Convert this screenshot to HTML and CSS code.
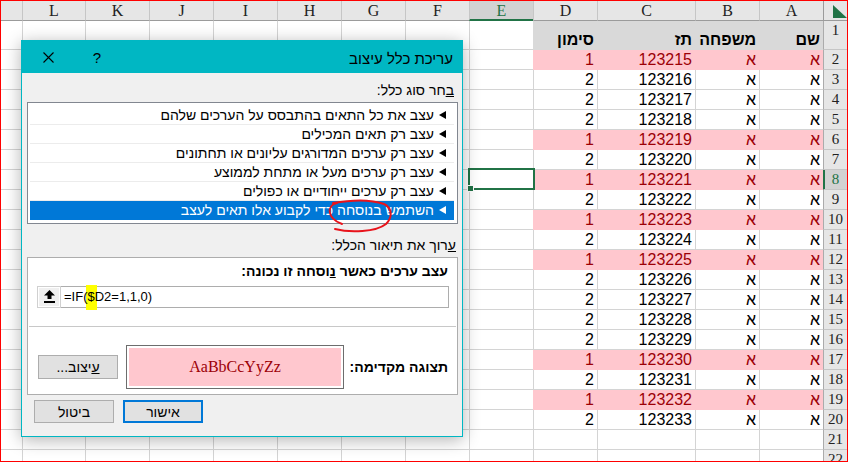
FILE: index.html
```html
<!DOCTYPE html>
<html lang="he">
<head>
<meta charset="utf-8">
<title>עריכת כלל עיצוב</title>
<link rel="stylesheet" href="styles.css">
</head>
<body>
<div class="screen">
  <div class="sheet">
    <div class="row hdr"><b class="rh corner"><svg width="14" height="13" viewBox="0 0 14 13"><polygon points="0,0 0,13 14,13" fill="#217346"/></svg></b><i>A</i><i>B</i><i>C</i><i>D</i><i class="csel">E</i><i>F</i><i>G</i><i>H</i><i>I</i><i>J</i><i>K</i><i>L</i><i></i></div>
    <div class="row r1"><b class="rh">1</b><i class="h">שם</i><i class="h">משפחה</i><i class="h">תז</i><i class="h">סימון</i><i></i><i></i><i></i><i></i><i></i><i></i><i></i><i></i><i></i></div>
    <div class="row pk"><b class="rh">2</b><i>א</i><i>א</i><i>123215</i><i>1</i><i></i><i></i><i></i><i></i><i></i><i></i><i></i><i></i><i></i></div>
    <div class="row"><b class="rh">3</b><i>א</i><i>א</i><i>123216</i><i>2</i><i></i><i></i><i></i><i></i><i></i><i></i><i></i><i></i><i></i></div>
    <div class="row"><b class="rh">4</b><i>א</i><i>א</i><i>123217</i><i>2</i><i></i><i></i><i></i><i></i><i></i><i></i><i></i><i></i><i></i></div>
    <div class="row"><b class="rh">5</b><i>א</i><i>א</i><i>123218</i><i>2</i><i></i><i></i><i></i><i></i><i></i><i></i><i></i><i></i><i></i></div>
    <div class="row pk"><b class="rh">6</b><i>א</i><i>א</i><i>123219</i><i>1</i><i></i><i></i><i></i><i></i><i></i><i></i><i></i><i></i><i></i></div>
    <div class="row"><b class="rh">7</b><i>א</i><i>א</i><i>123220</i><i>2</i><i></i><i></i><i></i><i></i><i></i><i></i><i></i><i></i><i></i></div>
    <div class="row pk"><b class="rh rsel">8</b><i>א</i><i>א</i><i>123221</i><i>1</i><i class="cur"></i><i></i><i></i><i></i><i></i><i></i><i></i><i></i><i></i></div>
    <div class="row"><b class="rh">9</b><i>א</i><i>א</i><i>123222</i><i>2</i><i></i><i></i><i></i><i></i><i></i><i></i><i></i><i></i><i></i></div>
    <div class="row pk"><b class="rh">10</b><i>א</i><i>א</i><i>123223</i><i>1</i><i></i><i></i><i></i><i></i><i></i><i></i><i></i><i></i><i></i></div>
    <div class="row"><b class="rh">11</b><i>א</i><i>א</i><i>123224</i><i>2</i><i></i><i></i><i></i><i></i><i></i><i></i><i></i><i></i><i></i></div>
    <div class="row pk"><b class="rh">12</b><i>א</i><i>א</i><i>123225</i><i>1</i><i></i><i></i><i></i><i></i><i></i><i></i><i></i><i></i><i></i></div>
    <div class="row"><b class="rh">13</b><i>א</i><i>א</i><i>123226</i><i>2</i><i></i><i></i><i></i><i></i><i></i><i></i><i></i><i></i><i></i></div>
    <div class="row"><b class="rh">14</b><i>א</i><i>א</i><i>123227</i><i>2</i><i></i><i></i><i></i><i></i><i></i><i></i><i></i><i></i><i></i></div>
    <div class="row"><b class="rh">15</b><i>א</i><i>א</i><i>123228</i><i>2</i><i></i><i></i><i></i><i></i><i></i><i></i><i></i><i></i><i></i></div>
    <div class="row"><b class="rh">16</b><i>א</i><i>א</i><i>123229</i><i>2</i><i></i><i></i><i></i><i></i><i></i><i></i><i></i><i></i><i></i></div>
    <div class="row pk"><b class="rh">17</b><i>א</i><i>א</i><i>123230</i><i>1</i><i></i><i></i><i></i><i></i><i></i><i></i><i></i><i></i><i></i></div>
    <div class="row"><b class="rh">18</b><i>א</i><i>א</i><i>123231</i><i>2</i><i></i><i></i><i></i><i></i><i></i><i></i><i></i><i></i><i></i></div>
    <div class="row pk"><b class="rh">19</b><i>א</i><i>א</i><i>123232</i><i>1</i><i></i><i></i><i></i><i></i><i></i><i></i><i></i><i></i><i></i></div>
    <div class="row"><b class="rh">20</b><i>א</i><i>א</i><i>123233</i><i>2</i><i></i><i></i><i></i><i></i><i></i><i></i><i></i><i></i><i></i></div>
    <div class="row"><b class="rh">21</b><i></i><i></i><i></i><i></i><i></i><i></i><i></i><i></i><i></i><i></i><i></i><i></i><i></i></div>
    <div class="row last"><b class="rh">22</b><i></i><i></i><i></i><i></i><i></i><i></i><i></i><i></i><i></i><i></i><i></i><i></i><i></i></div>
  </div>

  <div class="dlg">
    <div class="tb">
      <span class="ttl">עריכת כלל עיצוב</span>
      <span class="tbb">
        <span class="help">?</span>
        <span class="close"><svg width="11" height="11" viewBox="0 0 11 11"><path d="M0.5 0.5 L10.5 10.5 M10.5 0.5 L0.5 10.5" stroke="#000" stroke-width="1.1" fill="none"/></svg></span>
      </span>
    </div>
    <div class="body">
      <div class="lbl"><u>ב</u>חר סוג כלל:</div>
      <div class="list">
        <div class="it"><svg class="tri" width="7" height="8" viewBox="0 0 7 8"><polygon points="0,4 7,0 7,8"/></svg><span>עצב את כל התאים בהתבסס על הערכים שלהם</span></div>
        <div class="it"><svg class="tri" width="7" height="8" viewBox="0 0 7 8"><polygon points="0,4 7,0 7,8"/></svg><span>עצב רק תאים המכילים</span></div>
        <div class="it"><svg class="tri" width="7" height="8" viewBox="0 0 7 8"><polygon points="0,4 7,0 7,8"/></svg><span>עצב רק ערכים המדורגים עליונים או תחתונים</span></div>
        <div class="it"><svg class="tri" width="7" height="8" viewBox="0 0 7 8"><polygon points="0,4 7,0 7,8"/></svg><span>עצב רק ערכים מעל או מתחת לממוצע</span></div>
        <div class="it"><svg class="tri" width="7" height="8" viewBox="0 0 7 8"><polygon points="0,4 7,0 7,8"/></svg><span>עצב רק ערכים ייחודיים או כפולים</span></div>
        <div class="it on"><svg class="tri" width="7" height="8" viewBox="0 0 7 8"><polygon points="0,4 7,0 7,8"/></svg><span>השתמש בנוסחה כדי לקבוע אלו תאים לעצב</span></div>
      </div>
      <div class="lbl lbl2"><u>ע</u>רוך את תיאור הכלל:</div>
      <div class="desc">
        <div class="blbl">עצב ערכים כאשר <u>נ</u>וסחה זו נכונה:</div>
        <div class="inp">
          <span class="rb"><svg width="11" height="14" viewBox="0 0 11 14"><polygon points="5.5,0 11,5.5 7.5,5.5 7.5,9 3.5,9 3.5,5.5 0,5.5" fill="#000"/><rect x="0" y="11" width="11" height="2" fill="#000"/></svg></span>
          <span class="f">=IF(<span class="mark">$</span>D2=1,1,0)</span>
        </div>
        <div class="sep"></div>
        <div class="prow">
          <div class="blbl plbl">תצוגה מקדימה:</div>
          <div class="pgrp">
            <div class="pv"><span>AaBbCcYyZz</span></div>
            <div class="btn fmt"><u>ע</u>יצוב...</div>
          </div>
        </div>
      </div>
      <div class="btns">
        <div class="btn ok">אישור</div>
        <div class="btn">ביטול</div>
      </div>
    </div>
  </div>

  <svg class="annot" width="848" height="462" viewBox="0 0 848 462">
    <path d="M337 203 C327 205 326 218 342 224" stroke="#e8131b" stroke-width="2" fill="none" stroke-linecap="round"/>
    <path d="M335 229 C350 233 376 232 386 224 C393 217 392 208 384 204 C370 199 350 200 333 203" stroke="#e8131b" stroke-width="2" fill="none" stroke-linecap="round"/>
  </svg>
</div>
</body>
</html>
```

FILE: styles.css
```css
html, body { margin: 0; padding: 0; background: #fff; }

.screen {
  width: 848px;
  height: 462px;
  box-sizing: border-box;
  border: 1px solid #ff0000;
  position: relative;
  overflow: hidden;
  background: #fff;
}

/* ---------- spreadsheet ---------- */
.sheet { direction: rtl; }

.row {
  display: grid;
  grid-template-columns: 24px 64px 64px 98px 64px 64px 64px 64px 64px 64px 64px 64px 63px 1fr;
  height: 20px;
}
.row.last { height: 11px; overflow: hidden; }
.row > * {
  box-sizing: border-box;
  border-left: 1px solid #d4d4d4;
  border-bottom: 1px solid #d4d4d4;
  overflow: hidden;
  white-space: nowrap;
  font-style: normal;
  font-weight: normal;
  font-family: "Liberation Sans", Arial, "DejaVu Sans", sans-serif;
  font-size: 16px;
  line-height: 19px;
  padding-right: 3px;
  text-align: right;
  color: #000;
}
.row > *:last-child { border-left: none; }
.row.last > * { border-bottom: none; }

.row.r1 { height: 29px; }
.row.r1 > .h {
  background: #d9d9d9;
  border-color: #d9d9d9;
  font-weight: bold;
  padding-top: 9px;
}

.row.pk > *:nth-child(2),
.row.pk > *:nth-child(3),
.row.pk > *:nth-child(4),
.row.pk > *:nth-child(5) {
  background: #ffc7ce;
  border-color: #ffc7ce;
  color: #9c0006;
}

/* row headers */
.row > .rh {
  background: #e6e6e6;
  border-left-color: #ababab;
  border-bottom-color: #c6c6c6;
  font-family: "Liberation Serif", "Times New Roman", serif;
  font-size: 15px;
  text-align: center;
  padding: 0;
  color: #222;
}
.row > .rh.rsel {
  background: #d2d2d2;
  color: #217346;
  border-left-color: #217346;
  box-shadow: inset 1px 0 0 #217346;
}

/* column header row */
.row.hdr > * {
  background: #e6e6e6;
  border-left-color: #c6c6c6;
  border-bottom-color: #9b9b9b;
  font-family: "Liberation Serif", "Times New Roman", serif;
  font-size: 16px;
  text-align: center;
  padding: 0;
  line-height: 19px;
  color: #222;
}
.row.hdr > .corner {
  text-align: left;
  padding-left: 2px;
  border-left-color: #9b9b9b;
}
.row.hdr > .corner svg { display: block; margin-top: 4px; }
.row.hdr > .csel {
  background: #d2d2d2;
  color: #217346;
  border-bottom: 2px solid #217346;
}

/* selected cell */
.row > .cur { position: relative; overflow: visible; }
.row > .cur::before {
  content: "";
  position: absolute;
  left: -2px;
  right: -2px;
  top: -2px;
  bottom: -1px;
  border: 2px solid #217346;
}
.row > .cur::after {
  content: "";
  position: absolute;
  left: -3px;
  bottom: -3px;
  width: 5px;
  height: 5px;
  background: #217346;
  border: 1px solid #fff;
}

/* ---------- dialog ---------- */
.dlg {
  position: absolute;
  left: 20px;
  top: 39px;
  width: 442px;
  height: 397px;
  box-sizing: border-box;
  border: 1px solid #00b7c3;
  background: #f0f0f0;
  box-shadow: 0 3px 16px rgba(0, 0, 0, 0.3);
  direction: rtl;
  font-family: "Liberation Sans", Arial, "DejaVu Sans", sans-serif;
  font-size: 14px;
  color: #000;
  display: flex;
  flex-direction: column;
  z-index: 2;
}

.tb {
  height: 32px;
  background: #00b7c3;
  display: flex;
  align-items: center;
  justify-content: space-between;
}
.ttl {
  font-size: 15px;
  padding-right: 9px;
  margin-top: 2px;
}
.tbb { display: flex; align-items: center; height: 100%; }
.help {
  width: 46px;
  text-align: center;
  font-size: 15px;
  margin-top: 1px;
}
.close {
  width: 52px;
  display: flex;
  justify-content: center;
  align-items: center;
}
.close svg { display: block; }

.body {
  padding: 0 4px 0 5px;
  display: flex;
  flex-direction: column;
}

.lbl {
  height: 17px;
  line-height: 17px;
  margin-top: 9px;
  margin-bottom: 3px;
  padding-right: 4px;
}
.lbl2 { margin-top: 13px; padding-right: 2px; }

.list {
  height: 122px;
  box-sizing: border-box;
  border: 1px solid #828790;
  background: #fff;
  padding: 3px 3px 3px 2px;
}
.it {
  height: 19px;
  box-sizing: border-box;
  border-bottom: 1px solid #ececec;
  display: flex;
  align-items: center;
  gap: 5px;
  padding-right: 8px;
  white-space: nowrap;
}
.it .tri { display: block; fill: #000; flex: none; }
.it span { line-height: 18px; }
.it.on {
  background: #0078d7;
  border-bottom-color: #0078d7;
  color: #fff;
}
.it.on .tri { fill: #fff; }

.desc {
  height: 138px;
  box-sizing: border-box;
  border: 1px solid #adadad;
  background: #fff;
  display: flex;
  flex-direction: column;
}
.blbl {
  font-weight: bold;
  height: 17px;
  line-height: 17px;
  padding-right: 9px;
  margin-top: 5px;
}
.inp {
  direction: ltr;
  margin: 6px 8px 0 9px;
  height: 22px;
  box-sizing: border-box;
  border: 1px solid #adadad;
  display: flex;
  align-items: center;
  background: #fff;
  position: relative;
  z-index: 0;
}
.rb {
  width: 22px;
  height: 20px;
  box-sizing: border-box;
  background: #f0f0f0;
  border: 1px solid #fff;
  outline: 1px solid #d0d0d0;
  display: flex;
  justify-content: center;
  align-items: center;
}
.rb svg { display: block; }
.f {
  font-size: 13px;
  padding-left: 4px;
  line-height: 20px;
}
.mark { position: relative; }
.mark::before {
  content: "";
  position: absolute;
  left: -1px;
  right: -2px;
  top: -4px;
  bottom: -6px;
  background: #ffff00;
  z-index: -1;
}

.sep {
  height: 1px;
  background: #c8c8c8;
  margin: 18px 1px 0 1px;
}

.prow {
  display: flex;
  justify-content: space-between;
  align-items: center;
  height: 44px;
  margin-top: 18px;
  padding-left: 10px;
}
.plbl { margin-top: 0; }
.pgrp {
  display: flex;
  align-items: center;
  gap: 8px;
}
.pv {
  width: 218px;
  height: 44px;
  box-sizing: border-box;
  border: 1px solid #6d6d6d;
  padding: 2px;
  background: #fff;
}
.pv span {
  display: flex;
  height: 100%;
  align-items: center;
  justify-content: center;
  background: #ffc7ce;
  color: #9c0006;
  font-family: "Liberation Serif", "Times New Roman", serif;
  font-size: 16px;
  direction: ltr;
}

.btn {
  width: 80px;
  height: 24px;
  box-sizing: border-box;
  background: #e1e1e1;
  border: 1px solid #adadad;
  display: flex;
  align-items: center;
  justify-content: center;
  font-size: 14px;
}
.btns {
  display: flex;
  justify-content: flex-end;
  gap: 9px;
  margin-top: 5px;
  padding-left: 7px;
}
.btns .btn { height: 23px; }
.btn.ok { border: 2px solid #0078d7; }

/* ---------- annotations ---------- */
.annot {
  position: absolute;
  left: -1px;
  top: -1px;
  z-index: 3;
  pointer-events: none;
}
```
